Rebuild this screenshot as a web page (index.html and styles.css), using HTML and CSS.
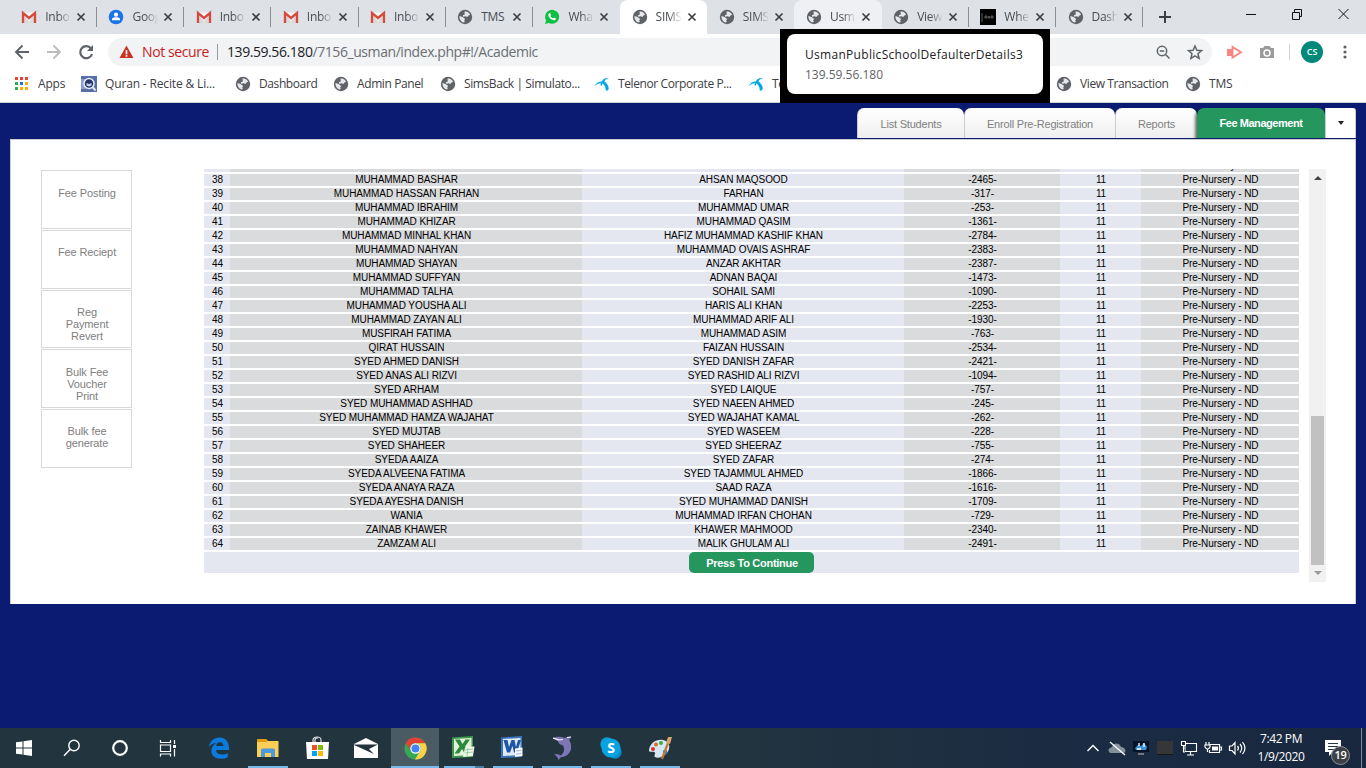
FILE: index.html
```html
<!DOCTYPE html>
<html lang="en">
<head>
<meta charset="utf-8">
<title>SIMS - Fee Management</title>
<link rel="stylesheet" href="styles.css">
</head>
<body>
<svg class="defs" width="0" height="0">
  <symbol id="gmail" viewBox="0 0 16 16"><path d="M1 3h14v11H1z" fill="#e9e9e9"/><path d="M3 5l5 9 5-9v9H3z" fill="#d8d8d8"/><path d="M3 4l5 4 5-4" fill="#f5f5f5"/><path d="M2 14V4l6 5 6-5v10" fill="none" stroke="#d54b3d" stroke-width="2.3"/></symbol>
  <symbol id="account" viewBox="0 0 16 16"><circle cx="8" cy="8" r="7.3" fill="#1a73e8"/><circle cx="8" cy="5.7" r="2.1" fill="#fff"/><path d="M4 11.2V10c0-2.2 8-2.2 8 0v1.2z" fill="#fff"/></symbol>
  <symbol id="globe" viewBox="0 0 16 16"><circle cx="8" cy="8" r="7.200" fill="#5f6368"/><path d="M7.500 2.600c2.800-.5 4.700 1 5.600 3.200l-1.600.8-1.200 1.300-1.800-.6-2.300.4-.4-1.500 2-.8z" fill="#e6e8eb"/><path d="M2.400 7l3.200 1 2.600 1.900-1 1.400.6 1.700-1.500.5C3.700 12.600 2.300 10 2.400 7z" fill="#e6e8eb"/></symbol>
  <symbol id="whatsapp" viewBox="0 0 16 16"><path d="M1 15l1.100-3.600A7 7 0 1 1 4.800 14z" fill="#0fbf45"/><path d="M5 4.200l1.200-.2.8 2-.7 1c.7 1.200 1.500 1.900 2.800 2.400l.9-1 2 1c-.3 1.600-1.500 2.100-2.900 1.700C6.500 10.400 4.300 8 4.200 6z" fill="#fff"/></symbol>
  <symbol id="close" viewBox="0 0 10 10"><path d="M1.500 1.500l7 7M8.500 1.500l-7 7" stroke="#3c4043" stroke-width="1.700"/></symbol>
  <symbol id="telenor" viewBox="0 0 16 16"><path d="M.5 10.200C2.500 6.500 5 5.300 7.800 5.400 8.800 3 11 1.600 15 2c-2.800.8-4 2-4.600 3.500 2.400 1.300 4.200 4.200 4.300 6.700.1 2-1.500 2.800-3 2.200.2-2.600-.8-5-3.200-7.200l-.8 2.300c-.6.5-1.500.1-1.200-.9l.5-1.600C4.800 7.300 2.500 8.500.5 10.200z" fill="#00a8e6"/></symbol>
</svg>

<header class="browser">
  <div class="tabstrip">
    <div class="tab"><svg class="fav"><use href="#gmail"/></svg><span class="tab-name">Inbo</span><svg class="x"><use href="#close"/></svg></div>
    <div class="tab"><svg class="fav"><use href="#account"/></svg><span class="tab-name">Goo<i>g</i></span><svg class="x"><use href="#close"/></svg></div>
    <div class="tab"><svg class="fav"><use href="#gmail"/></svg><span class="tab-name">Inbo</span><svg class="x"><use href="#close"/></svg></div>
    <div class="tab"><svg class="fav"><use href="#gmail"/></svg><span class="tab-name">Inbo</span><svg class="x"><use href="#close"/></svg></div>
    <div class="tab"><svg class="fav"><use href="#gmail"/></svg><span class="tab-name">Inbo</span><svg class="x"><use href="#close"/></svg></div>
    <div class="tab"><svg class="fav"><use href="#globe"/></svg><span class="tab-name solid">TMS</span><svg class="x"><use href="#close"/></svg></div>
    <div class="tab no-line"><svg class="fav"><use href="#whatsapp"/></svg><span class="tab-name">Wha</span><svg class="x"><use href="#close"/></svg></div>
    <div class="tab active"><svg class="fav"><use href="#globe"/></svg><span class="tab-name">SIMS</span><svg class="x"><use href="#close"/></svg></div>
    <div class="tab no-line"><svg class="fav"><use href="#globe"/></svg><span class="tab-name">SIMS</span><svg class="x"><use href="#close"/></svg></div>
    <div class="tab hover"><svg class="fav"><use href="#globe"/></svg><span class="tab-name">Usm</span><svg class="x"><use href="#close"/></svg></div>
    <div class="tab"><svg class="fav"><use href="#globe"/></svg><span class="tab-name">View</span><svg class="x"><use href="#close"/></svg></div>
    <div class="tab"><svg class="fav" viewBox="0 0 16 16"><path d="M0 0h16v16H0z"/><path d="M2 4v9M4 8h10M6 6v4M9 7v3M12 6v4" stroke="#777" stroke-width=".8"/></svg><span class="tab-name">Whe</span><svg class="x"><use href="#close"/></svg></div>
    <div class="tab"><svg class="fav"><use href="#globe"/></svg><span class="tab-name">Dash</span><svg class="x"><use href="#close"/></svg></div>
    <svg class="new-tab" viewBox="0 0 12 12"><path d="M6 0v12M0 6h12" stroke="#3c4043" stroke-width="2"/></svg>
    <svg class="window-buttons" viewBox="0 0 104 12" fill="none" stroke="#111"><path d="M0 6.500h10M92.500 1l10 10M102.500 1l-10 10"/><path d="M46.500 4.500h7v7h-7zM48.500 4V1.500h7v7H54"/></svg>
  </div>

  <div class="toolbar">
    <svg class="nav-icons" viewBox="0 0 82 20" fill="none" stroke-width="1.900"><path d="M15 10H2.500M8.500 3.500L2 10l6.500 6.500" stroke="#5f6368"/><path d="M33 10h12.500M39.500 3.500L46 10l-6.500 6.500" stroke="#bbbdbf"/><path d="M77 6.500A6 6 0 1 0 78 12" stroke="#5f6368" stroke-width="2.200"/><path d="M79 3v6h-6z" fill="#5f6368"/></svg>
    <div class="omnibox">
      <svg class="warn" viewBox="0 0 16 14"><path d="M8 0l7.500 13.500H.5z" fill="#cb3226"/><path d="M8 5v4M8 10v2" stroke="#fff" stroke-width="1.800"/></svg>
      <span class="not-secure">Not secure</span>
      <span class="url"><b>139.59.56.180</b>/7156_usman/index.php#!/Academic</span>
      <svg class="omni-icons" viewBox="0 0 50 16" fill="none" stroke="#5f6368" stroke-width="1.500"><circle cx="6" cy="7" r="4.700"/><path d="M9.500 10.500l4 4M3.800 7h4.400"/><path d="M39 2l1.900 4.300 4.600.4-3.500 3 1.100 4.600-4.100-2.500-4.100 2.500 1.100-4.600-3.500-3 4.600-.4z"/></svg>
    </div>
    <svg class="ext" viewBox="0 0 64 18"><path d="M1 6h6v7H1z" fill="#f78782"/><path d="M6.500 4v10.500L15 9.300z" fill="#fff" stroke="#f78782" stroke-width="1.900"/><path d="M34 5h3l1.500-2h5L45 5h3v10H34z" fill="#9b9b9b"/><circle cx="41" cy="10" r="3" fill="none" stroke="#fff" stroke-width="1.500"/><path d="M63.500 1v16" stroke="#d0d2d4"/></svg>
    <span class="avatar">CS</span>
    <svg class="dots" viewBox="0 0 4 14"><g fill="#5f6368"><circle cx="2" cy="2" r="1.600"/><circle cx="2" cy="7" r="1.600"/><circle cx="2" cy="12" r="1.600"/></g></svg>
  </div>

  <nav class="bookmarks">
    <span class="bm bm-apps"><svg class="fav" viewBox="0 0 16 16"><path d="M1 1h3v3H1zM6 1h3v3H6zM11 1h3v3h-3z" fill="#ea4335"/><path d="M1 6h3v3H1zM1 11h3v3H1z" fill="#34a853"/><path d="M6 6h3v3H6z" fill="#1a73e8"/><path d="M11 6h3v3h-3zM6 11h3v3H6zM11 11h3v3h-3z" fill="#fbae05"/></svg>Apps</span>
    <span class="bm bm-quran"><svg class="fav" viewBox="0 0 16 16"><path d="M0 0h16v16H0z" fill="#566fa8"/><path d="M0 3h5v10H0z" fill="#8ca0cc"/><circle cx="8" cy="7.500" r="5" fill="#26366b" stroke="#e7ecf5" stroke-width="1.500"/><path d="M5.500 7l2.500 1 2.500-1v2.500l-2.500 1-2.500-1z" fill="#c5d0e8"/><path d="M11.500 11l3 3.500" stroke="#dfe5f2" stroke-width="2"/></svg>Quran - Recite &amp; Li...</span>
    <span class="bm bm-dash"><svg class="fav"><use href="#globe"/></svg>Dashboard</span>
    <span class="bm bm-admin"><svg class="fav"><use href="#globe"/></svg>Admin Panel</span>
    <span class="bm bm-sims"><svg class="fav"><use href="#globe"/></svg>SimsBack | Simulato...</span>
    <span class="bm bm-tele"><svg class="fav"><use href="#telenor"/></svg>Telenor Corporate P...</span>
    <span class="bm bm-te"><svg class="fav"><use href="#telenor"/></svg>Te</span>
    <span class="bm bm-view"><svg class="fav"><use href="#globe"/></svg>View Transaction</span>
    <span class="bm bm-tms"><svg class="fav"><use href="#globe"/></svg>TMS</span>
  </nav>
  <div class="tab-tip"><div class="tip-card"><strong>UsmanPublicSchoolDefaulterDetails3</strong><span>139.59.56.180</span></div></div>
</header>

<main class="page">
  <div class="page-tabs">
    <a class="ptab pt-list">List Students</a><a class="ptab pt-enroll">Enroll Pre-Registration</a><a class="ptab pt-reports">Reports</a><a class="ptab pt-fee">Fee Management</a><a class="pt-more"></a>
  </div>
  <section class="panel">
    <aside class="side">
      <a class="side-item first">Fee Posting</a>
      <a class="side-item">Fee Reciept</a>
      <a class="side-item tall">Reg<br>Payment<br>Revert</a>
      <a class="side-item tall">Bulk Fee<br>Voucher<br>Print</a>
      <a class="side-item">Bulk fee<br>generate</a>
    </aside>
    <div class="list">
      <div class="row cut"><span></span><span></span><span></span><span></span><span></span><span>Pre-Nursery - ND</span></div>
      <div class="row"><span>38</span><span>MUHAMMAD BASHAR</span><span>AHSAN MAQSOOD</span><span>-2465-</span><span>11</span><span>Pre-Nursery - ND</span></div>
      <div class="row"><span>39</span><span>MUHAMMAD HASSAN FARHAN</span><span>FARHAN</span><span>-317-</span><span>11</span><span>Pre-Nursery - ND</span></div>
      <div class="row"><span>40</span><span>MUHAMMAD IBRAHIM</span><span>MUHAMMAD UMAR</span><span>-253-</span><span>11</span><span>Pre-Nursery - ND</span></div>
      <div class="row"><span>41</span><span>MUHAMMAD KHIZAR</span><span>MUHAMMAD QASIM</span><span>-1361-</span><span>11</span><span>Pre-Nursery - ND</span></div>
      <div class="row"><span>42</span><span>MUHAMMAD MINHAL KHAN</span><span>HAFIZ MUHAMMAD KASHIF KHAN</span><span>-2784-</span><span>11</span><span>Pre-Nursery - ND</span></div>
      <div class="row"><span>43</span><span>MUHAMMAD NAHYAN</span><span>MUHAMMAD OVAIS ASHRAF</span><span>-2383-</span><span>11</span><span>Pre-Nursery - ND</span></div>
      <div class="row"><span>44</span><span>MUHAMMAD SHAYAN</span><span>ANZAR AKHTAR</span><span>-2387-</span><span>11</span><span>Pre-Nursery - ND</span></div>
      <div class="row"><span>45</span><span>MUHAMMAD SUFFYAN</span><span>ADNAN BAQAI</span><span>-1473-</span><span>11</span><span>Pre-Nursery - ND</span></div>
      <div class="row"><span>46</span><span>MUHAMMAD TALHA</span><span>SOHAIL SAMI</span><span>-1090-</span><span>11</span><span>Pre-Nursery - ND</span></div>
      <div class="row"><span>47</span><span>MUHAMMAD YOUSHA ALI</span><span>HARIS ALI KHAN</span><span>-2253-</span><span>11</span><span>Pre-Nursery - ND</span></div>
      <div class="row"><span>48</span><span>MUHAMMAD ZAYAN ALI</span><span>MUHAMMAD ARIF ALI</span><span>-1930-</span><span>11</span><span>Pre-Nursery - ND</span></div>
      <div class="row"><span>49</span><span>MUSFIRAH FATIMA</span><span>MUHAMMAD ASIM</span><span>-763-</span><span>11</span><span>Pre-Nursery - ND</span></div>
      <div class="row"><span>50</span><span>QIRAT HUSSAIN</span><span>FAIZAN HUSSAIN</span><span>-2534-</span><span>11</span><span>Pre-Nursery - ND</span></div>
      <div class="row"><span>51</span><span>SYED AHMED DANISH</span><span>SYED DANISH ZAFAR</span><span>-2421-</span><span>11</span><span>Pre-Nursery - ND</span></div>
      <div class="row"><span>52</span><span>SYED ANAS ALI RIZVI</span><span>SYED RASHID ALI RIZVI</span><span>-1094-</span><span>11</span><span>Pre-Nursery - ND</span></div>
      <div class="row"><span>53</span><span>SYED ARHAM</span><span>SYED LAIQUE</span><span>-757-</span><span>11</span><span>Pre-Nursery - ND</span></div>
      <div class="row"><span>54</span><span>SYED MUHAMMAD ASHHAD</span><span>SYED NAEEN AHMED</span><span>-245-</span><span>11</span><span>Pre-Nursery - ND</span></div>
      <div class="row"><span>55</span><span>SYED MUHAMMAD HAMZA WAJAHAT</span><span>SYED WAJAHAT KAMAL</span><span>-262-</span><span>11</span><span>Pre-Nursery - ND</span></div>
      <div class="row"><span>56</span><span>SYED MUJTAB</span><span>SYED WASEEM</span><span>-228-</span><span>11</span><span>Pre-Nursery - ND</span></div>
      <div class="row"><span>57</span><span>SYED SHAHEER</span><span>SYED SHEERAZ</span><span>-755-</span><span>11</span><span>Pre-Nursery - ND</span></div>
      <div class="row"><span>58</span><span>SYEDA AAIZA</span><span>SYED ZAFAR</span><span>-274-</span><span>11</span><span>Pre-Nursery - ND</span></div>
      <div class="row"><span>59</span><span>SYEDA ALVEENA FATIMA</span><span>SYED TAJAMMUL AHMED</span><span>-1866-</span><span>11</span><span>Pre-Nursery - ND</span></div>
      <div class="row"><span>60</span><span>SYEDA ANAYA RAZA</span><span>SAAD RAZA</span><span>-1616-</span><span>11</span><span>Pre-Nursery - ND</span></div>
      <div class="row"><span>61</span><span>SYEDA AYESHA DANISH</span><span>SYED MUHAMMAD DANISH</span><span>-1709-</span><span>11</span><span>Pre-Nursery - ND</span></div>
      <div class="row"><span>62</span><span>WANIA</span><span>MUHAMMAD IRFAN CHOHAN</span><span>-729-</span><span>11</span><span>Pre-Nursery - ND</span></div>
      <div class="row"><span>63</span><span>ZAINAB KHAWER</span><span>KHAWER MAHMOOD</span><span>-2340-</span><span>11</span><span>Pre-Nursery - ND</span></div>
      <div class="row"><span>64</span><span>ZAMZAM ALI</span><span>MALIK GHULAM ALI</span><span>-2491-</span><span>11</span><span>Pre-Nursery - ND</span></div>
      <div class="list-foot"><button class="continue">Press To Continue</button></div>
    </div>
    <div class="scrollbar"><i class="arrow up"></i><div class="thumb"></div><i class="arrow down"></i></div>
  </section>
</main>

<footer class="taskbar">
  <div class="task sys"><svg width="16" height="16" viewBox="0 0 16 16"><path d="M0 2.300L6.500 1.400v6.100H0zM7.500 1.200L16 0v7.500H7.500zM0 8.500h6.500v6.100L0 13.700zM7.500 8.500H16V16l-8.500-1.200z" fill="#fff"/></svg></div>
  <div class="task sys"><svg width="18" height="18" viewBox="0 0 18 18" fill="none" stroke="#fff" stroke-width="1.400"><circle cx="11" cy="6.500" r="5.200"/><path d="M7.300 10.200L1 16.800"/></svg></div>
  <div class="task sys"><svg width="18" height="18" viewBox="0 0 18 18"><circle cx="9" cy="9" r="6.800" fill="none" stroke="#fff" stroke-width="2.200"/></svg></div>
  <div class="task sys"><svg width="18" height="18" viewBox="0 0 18 18" fill="none" stroke="#fff" stroke-width="1.200"><path d="M1.500 1v2.500h10V1M1.500 6h10v6.500h-10zM1.500 17.500V15h10v2.500M15.500 1v4M15.500 10v7.500"/><path d="M14 6h3v3h-3z" fill="#fff" stroke="none"/></svg></div>
  <div class="task first"><svg width="22" height="22" viewBox="0 0 22 22"><path d="M1 10C2 4 6 .5 11.500.5 17.500.5 21 5 21 10.500V13H8c.3 3 2.500 4.500 5.800 4.500 2.300 0 4.300-.6 6-1.600v4.300c-2 1-4.300 1.500-7 1.500C7 21.700 3.300 18.500 3.300 14c0-3.600 2-6.400 5-8C5.500 6 3 7.400 1 10zM8.200 9h7.200c0-2.400-1.400-3.700-3.500-3.700S8.500 6.800 8.200 9z" fill="#0a7bdc"/></svg></div>
  <div class="task run"><svg width="22" height="20" viewBox="0 0 22 20"><path d="M0 1h9l2 2h10.500v16H0z" fill="#fbce57"/><path d="M0 1h9l2 2-2 1H0z" fill="#e09c10"/><path d="M4 19v-7q0-1.500 1.500-1.500h11Q18 10.500 18 12v7h-4v-4H8v4z" fill="#4a9ade"/></svg></div>
  <div class="task"><svg width="24" height="24" viewBox="0 0 24 24"><path d="M8 7V4c0-4 8-4 8 0v3M10 7V4q0-2 3-2" fill="none" stroke="#ddd" stroke-width="1.200"/><path d="M1 6h23l-1 17H2z" fill="#fff"/><path d="M7 9h5v5H7z" fill="#f25022"/><path d="M13 9h5v5h-5z" fill="#7fba00"/><path d="M7 15h5v5H7z" fill="#00a4ef"/><path d="M13 15h5v5h-5z" fill="#ffb900"/></svg></div>
  <div class="task"><svg width="24" height="20" viewBox="0 0 24 20"><path d="M0 6L12 0l12 6v14H0z" fill="#fff"/><path d="M0 6.500h24L15 11l5 5L0 7z" fill="#22333c"/></svg></div>
  <div class="task run current"><svg width="23" height="23" viewBox="0 0 24 24"><circle cx="12" cy="12" r="11.500" fill="#34a853"/><path d="M2 6.200A11.500 11.500 0 0 1 22 6.500H12a5.500 5.500 0 0 0-5 8z" fill="#e34133"/><path d="M22.200 6.500A11.500 11.500 0 0 1 11.500 23.500L16.800 14.700A5.500 5.500 0 0 0 12 6.500z" fill="#fdd145"/><circle cx="12" cy="12" r="5.400" fill="#fff"/><circle cx="12" cy="12" r="4.200" fill="#4285f4"/></svg></div>
  <div class="task run split"><svg class="raised" width="24" height="22" viewBox="0 0 24 22"><path d="M1 1.500L22 0v21L1 22z" fill="#3d9b48"/><path d="M3 3l17.500-1v17L3 20z" fill="#e3f1dc"/><path d="M4 3.500h5l2.500 4.500 3-4.500H19l-5 7 4.500 6.500h-5L11 13l-3 4.500H3.500l5-7z" fill="#2a8a3a"/><path d="M14 11.500l9.500-1L22 20l-10 1z" fill="#f1f9ed"/><path d="M14 14l8.500-1M13.500 17l8.500-1M17 12l-1 8.500" stroke="#8cc08d" stroke-width=".8"/></svg></div>
  <div class="task run"><svg class="raised" width="22" height="22" viewBox="0 0 22 22"><path d="M0 1.500L21 0v21L0 22z" fill="#3b74bf"/><path d="M2 3l17.500-1v17L2 20z" fill="#dfeaf8"/><path d="M2.500 4h4L8 11l2.500-7h3L15 11l2-7h3l-4 12.500h-3L11.500 10 9 16.500H6z" fill="#1f55a5"/><path d="M14 12.500l7.500-1V20l-7.500 1z" fill="#f6f9fe"/><path d="M15 15l5.500-.6M15 18l5.500-.6" stroke="#94b2da" stroke-width=".9"/></svg></div>
  <div class="task run"><svg width="22" height="24" viewBox="0 0 22 24"><path d="M2 2c4-1.800 8-1.600 11.500 0C15 1 18 .3 20.500.8c-.7 1.300-1.500 2.200-2.500 2.900 3.800 6 2.600 13-3 16-2 1-3.500 1.300-5 1.300L7.500 24C6.800 21.500 5.500 19.800 3 18.500c2.800-.6 5-.3 6.700.9 3.500-2.400 4.300-6.200 2.300-9.900L8.500 8 7 5.500z" fill="#7c76b5"/><path d="M2 2.200l6 1.600 4-.3M16 1.500l4-.5" stroke="#ece9f8" stroke-width="1.200" fill="none"/></svg></div>
  <div class="task run"><svg width="22" height="22" viewBox="0 0 22 22"><circle cx="7" cy="7" r="6.700" fill="#0d9ed8"/><circle cx="15" cy="15" r="6.700" fill="#078bcb"/><circle cx="11" cy="11" r="9.500" fill="#0aa3e2"/><text x="11" y="16" class="skype-s">S</text></svg></div>
  <div class="task run"><svg width="24" height="24" viewBox="0 0 24 24"><path d="M1 14C2 7 8 3 15 4c7 1 8 8 4 13-4 4-9 6-12 4-2-1 2-4-1-5-2-1-5 1-5-2z" fill="#d4e7f3"/><circle cx="5" cy="13" r="2" fill="#d93229"/><circle cx="8" cy="8.500" r="2" fill="#dd6d26"/><circle cx="13" cy="7" r="2" fill="#3fae49"/><circle cx="17" cy="16" r="2.200" fill="#347dc4"/><path d="M14 23l6-16" stroke="#c2762c" stroke-width="2.200"/><path d="M18 7l2-6 4 0-2 7z" fill="#dca36c"/></svg></div>
  <div class="tray">
    <svg class="ti" viewBox="0 0 24 20"><path d="M6.500 13l5.500-5.500 5.500 5.500" fill="none" stroke="#fff" stroke-width="1.400"/></svg>
    <svg class="ti" viewBox="0 0 24 20"><path d="M5 15q-4-4 2-6c2-5 8-4 9 0 5 0 6 6 2 6z" fill="#84909c"/><path d="M5 4l15 13" stroke="#fff" stroke-width="1.300"/></svg>
    <svg class="ti" viewBox="0 0 24 20"><path d="M4 3h16v11H4z" fill="#061225"/><path d="M6 10l3-3 3 1 3-3 3 4-1 3H7z" fill="#3c92d4"/><path d="M10 5v3M15 5v4M8 11h4" stroke="#fff" stroke-width="1.300"/><path d="M9 16h6" stroke="#777" stroke-width="2"/></svg>
    <svg class="ti" viewBox="0 0 24 20"><path d="M4 3h16v13H4z" fill="#343638"/><path d="M4 16.500h16" stroke="#171717"/></svg>
    <svg class="ti" viewBox="0 0 24 20" fill="none" stroke="#fff" stroke-width="1.100"><path d="M8 5.500h11.500v8H8zM13.500 14v3M10 17h7"/><path d="M4.500 3.500h4v4h-4zM6.500 8v6H8" fill="#17263c"/></svg>
    <svg class="ti" viewBox="0 0 24 20" fill="none" stroke="#fff" stroke-width="1.200"><path d="M9 6.500h9.500v8H8.500V12M19 9h1.500v3H19M5 4v3M8 4v3M4 7h5v2q-1 2-2.500 2T4 9zM6.500 11v3"/><path d="M11 8.500h6v4h-6z" fill="#fff" stroke="none"/></svg>
    <svg class="ti" viewBox="0 0 24 20" fill="none" stroke="#fff" stroke-width="1.200"><path d="M4.500 8v4.500h2.500l3 3.500V4.500L7 8zM12.500 8q1.800 2.200 0 4.500M15 6q3.500 4.200 0 8.500M17.500 4.200q5 6 0 12"/></svg>
    <div class="clock"><span>7:42 PM</span><span>1/9/2020</span></div>
    <div class="notice"><svg width="17" height="18" viewBox="0 0 17 18"><path d="M0 0h16v12H8l-4 4v-4H0z" fill="#fff"/><path d="M3 3.500h10M3 6.500h10M3 9.500h6" stroke="#26364c"/></svg><span class="count">19</span></div>
  </div>
</footer>
</body>
</html>
```
FILE: styles.css
```css
* { box-sizing: border-box; }
body { margin: 0; width: 1366px; height: 768px; overflow: hidden; display: flex; flex-direction: column; background: #0c1b72; font-family: "Liberation Sans", Arial, sans-serif; }
.defs { position: absolute; }
svg { flex: none; }

/* browser chrome */
.browser { position: relative; height: 103px; background: #fff; border-bottom: 1px solid #cfd1d4; font-family: "Open Sans", "Noto Sans", sans-serif; flex: none; }
.tabstrip { height: 34px; display: flex; background: #dee1e6; padding-left: 9.800px; }
.tab { flex: none; width: 87.200px; height: 34px; display: flex; align-items: center; padding-left: 11.500px; position: relative; border-radius: 8px 8px 0 0; }
.tab::after { content: ""; position: absolute; right: 0; top: 7px; width: 1px; height: 20px; background: #8a8d91; }
.tab.no-line::after, .tab.active::after, .tab.hover::after { display: none; }
.tab.active { background: #fff; }
.tab.hover { background: #eef0f3; }
.fav { width: 16px; height: 16px; }
.tab-name { width: 26px; margin-left: 8px; overflow: hidden; white-space: nowrap; font-size: 12px; line-height: 18px; letter-spacing: -.3px; color: #4a4e52; -webkit-mask-image: linear-gradient(90deg, #000 50%, transparent 100%); mask-image: linear-gradient(90deg, #000 50%, transparent 100%); }
.tab-name i { font-style: normal; }
.tab-name.solid { -webkit-mask-image: none; mask-image: none; }
.x { width: 10px; height: 10px; margin-left: 5px; }
.new-tab { width: 12px; height: 12px; margin: 11px 0 0 15.500px; }
.window-buttons { width: 104px; height: 12px; margin: 8px 16px 0 auto; }
.toolbar { height: 36px; display: flex; align-items: center; padding-left: 14px; }
.nav-icons { width: 82px; height: 20px; }
.omnibox { width: 1104px; height: 28px; margin-left: 12px; border-radius: 14px; background: #f1f3f4; display: flex; align-items: center; padding: 0 6px 0 11px; font-size: 14px; white-space: nowrap; }
.warn { width: 15px; height: 14px; margin-top: -1px; }
.not-secure { width: 76px; margin-left: 8px; color: #c5221f; border-right: 1px solid #9a9da1; line-height: 16px; letter-spacing: -.4px; }
.url { margin-left: 9px; color: #6b6f74; letter-spacing: -.43px; margin-top: -1px; }
.url b { font-weight: 400; color: #202124; }
.omni-icons { width: 50px; height: 16px; margin-left: auto; }
.ext { width: 64px; height: 18px; margin-left: 14px; }
.avatar { width: 22px; height: 22px; margin-left: 11px; border-radius: 50%; background: #00897b; color: #fff; font-size: 9px; font-weight: 600; line-height: 22px; text-align: center; }
.dots { width: 4px; height: 14px; margin-left: 20px; }
.bookmarks { height: 28px; display: flex; align-items: center; padding: 0 0 1px 14px; font-size: 12px; color: #3c4043; white-space: nowrap; }
.bm { display: flex; align-items: center; gap: 8px; flex: none; letter-spacing: -.4px; }
.bm-apps { width: 67px; letter-spacing: -.2px; }
.bm-quran { width: 154px; letter-spacing: -.15px; }
.bm-dash { width: 98px; }
.bm-admin { width: 107px; }
.bm-sims { width: 154px; }
.bm-tele { width: 154px; }
.bm-te { width: 308px; }
.bm-view { width: 129px; }
.bm-tms { letter-spacing: -.2px; }
.tab-tip { position: absolute; left: 780px; top: 29px; width: 270px; height: 74px; padding: 5px 7px; background: #000; }
.tip-card { height: 60px; border-radius: 8px; background: #fff; padding: 11px 18px; display: flex; flex-direction: column; font-size: 12px; line-height: 20px; color: #5f6368; white-space: nowrap; }
.tip-card strong { font-weight: 500; color: #202124; letter-spacing: .3px; }

/* application page */
.page { flex: 1; padding: 5px 10px 0; }
.page-tabs { display: flex; justify-content: flex-end; height: 31px; font-size: 11px; color: #808080; }
.ptab { height: 30px; line-height: 33px; text-align: center; background: linear-gradient(#fff, #efefef); border-left: 1px solid #ccc; border-radius: 7px 7px 0 0; letter-spacing: -.2px; }
.pt-list { width: 107px; }
.pt-enroll { width: 151px; }
.pt-reports { width: 82px; }
.pt-fee { width: 128px; line-height: 31px; background: #24965e; color: #fff; font-weight: 700; border: 0; box-shadow: -2px 2px 3px rgba(0,0,0,.55); clip-path: inset(0 0 0 -5px); letter-spacing: -.45px; }
.pt-more { width: 31px; height: 30px; background: #fff; border: 1px solid #ccc; border-width: 0 1px; border-radius: 0 3px 0 0; display: flex; align-items: center; justify-content: center; }
.pt-more::after { content: ""; border: 3px solid transparent; border-top: 4px solid #222; border-bottom: 0; }
.panel { height: 465px; display: flex; background: #fff; border: 1px solid #ccc; border-bottom: 0; padding: 29px 29px 0 30px; }
.side { width: 91px; display: flex; flex-direction: column; gap: 1px; padding-top: 1px; }
.side-item { flex: none; height: 58.800px; border: 1px solid #d7d8d9; padding: 15px 0 0 1px; text-align: center; font-size: 11px; line-height: 12px; letter-spacing: -.1px; color: #808080; }
.side-item.first { padding-top: 16px; }
.side-item.tall { padding-top: 15.800px; }
.list { width: 1095px; height: 413px; margin-left: 72px; display: flex; flex-direction: column; overflow: hidden; font-size: 10px; letter-spacing: -.08px; color: #000; }
.row { flex: none; display: grid; grid-template-columns: 26px 352px 322px 156px 81px 158px; height: 11px; margin-bottom: 3px; text-align: center; line-height: 12px; }
.row span { background: #e4e7ef; white-space: nowrap; padding-left: 1px; }
.row span:nth-child(even) { background: #dadbdc; }
.row.cut { margin-top: -9px; }
.list-foot { height: 21px; background: #e4e7ef; text-align: center; }
.continue { display: block; margin: 0 auto; width: 125px; height: 21px; padding: 1px 0 0 1px; border: 0; border-radius: 5px; background: #24965e; color: #fff; font: 700 11px/20px "Liberation Sans", Arial, sans-serif; letter-spacing: -.28px; }
.scrollbar { width: 17px; height: 413px; margin-left: 10px; background: #f1f1f1; display: flex; flex-direction: column; align-items: center; }
.thumb { width: 13px; height: 149px; margin-top: auto; background: #c1c1c1; }
.arrow { border: 4px solid transparent; }
.arrow.up { border-top: 0; border-bottom-color: #444; margin-top: 7px; }
.arrow.down { border-bottom: 0; border-top-color: #999; margin: 6px 0 7px; }

/* taskbar */
.taskbar { height: 40px; flex: none; display: flex; background: linear-gradient(90deg, #22353e 0%, #22353e 50%, #1a2b43 80%, #19283f 100%); }
.task { width: 48px; height: 40px; margin-right: 1px; display: flex; align-items: center; justify-content: center; position: relative; flex: none; }
.task.sys { margin-right: 0; }
.task.first { margin-left: 3px; }
.task.run::after { content: ""; position: absolute; left: 4px; right: 4px; bottom: 0; height: 2px; background: #76b9ed; }
.task.current { background: #4b5b63; }
.task.current::after { left: 0; right: 0; }
.task.split::after { background: linear-gradient(90deg, #76b9ed 31px, #4b7d9f 31px); }
.raised { margin: 0 2px 3px 0; }
.skype-s { font: 700 14px "Open Sans", sans-serif; fill: #fff; text-anchor: middle; }
.tray { margin-left: auto; display: flex; align-items: center; padding-right: 4px; color: #fff; }
.ti { width: 24px; height: 20px; }
.clock { width: 64px; display: flex; flex-direction: column; text-align: center; font: 12px/18px "Open Sans", "Noto Sans", sans-serif; letter-spacing: -.4px; }
.notice { width: 49px; height: 40px; padding: 12px 0 0 12px; position: relative; border-right: 1px solid #7e8b9b; }
.count { position: absolute; left: 18px; top: 18px; width: 19px; height: 19px; border-radius: 50%; background: #3d4147; border: 1px solid #8d9299; font: 600 11px/16px "Open Sans", sans-serif; letter-spacing: -.3px; text-align: center; }
```
